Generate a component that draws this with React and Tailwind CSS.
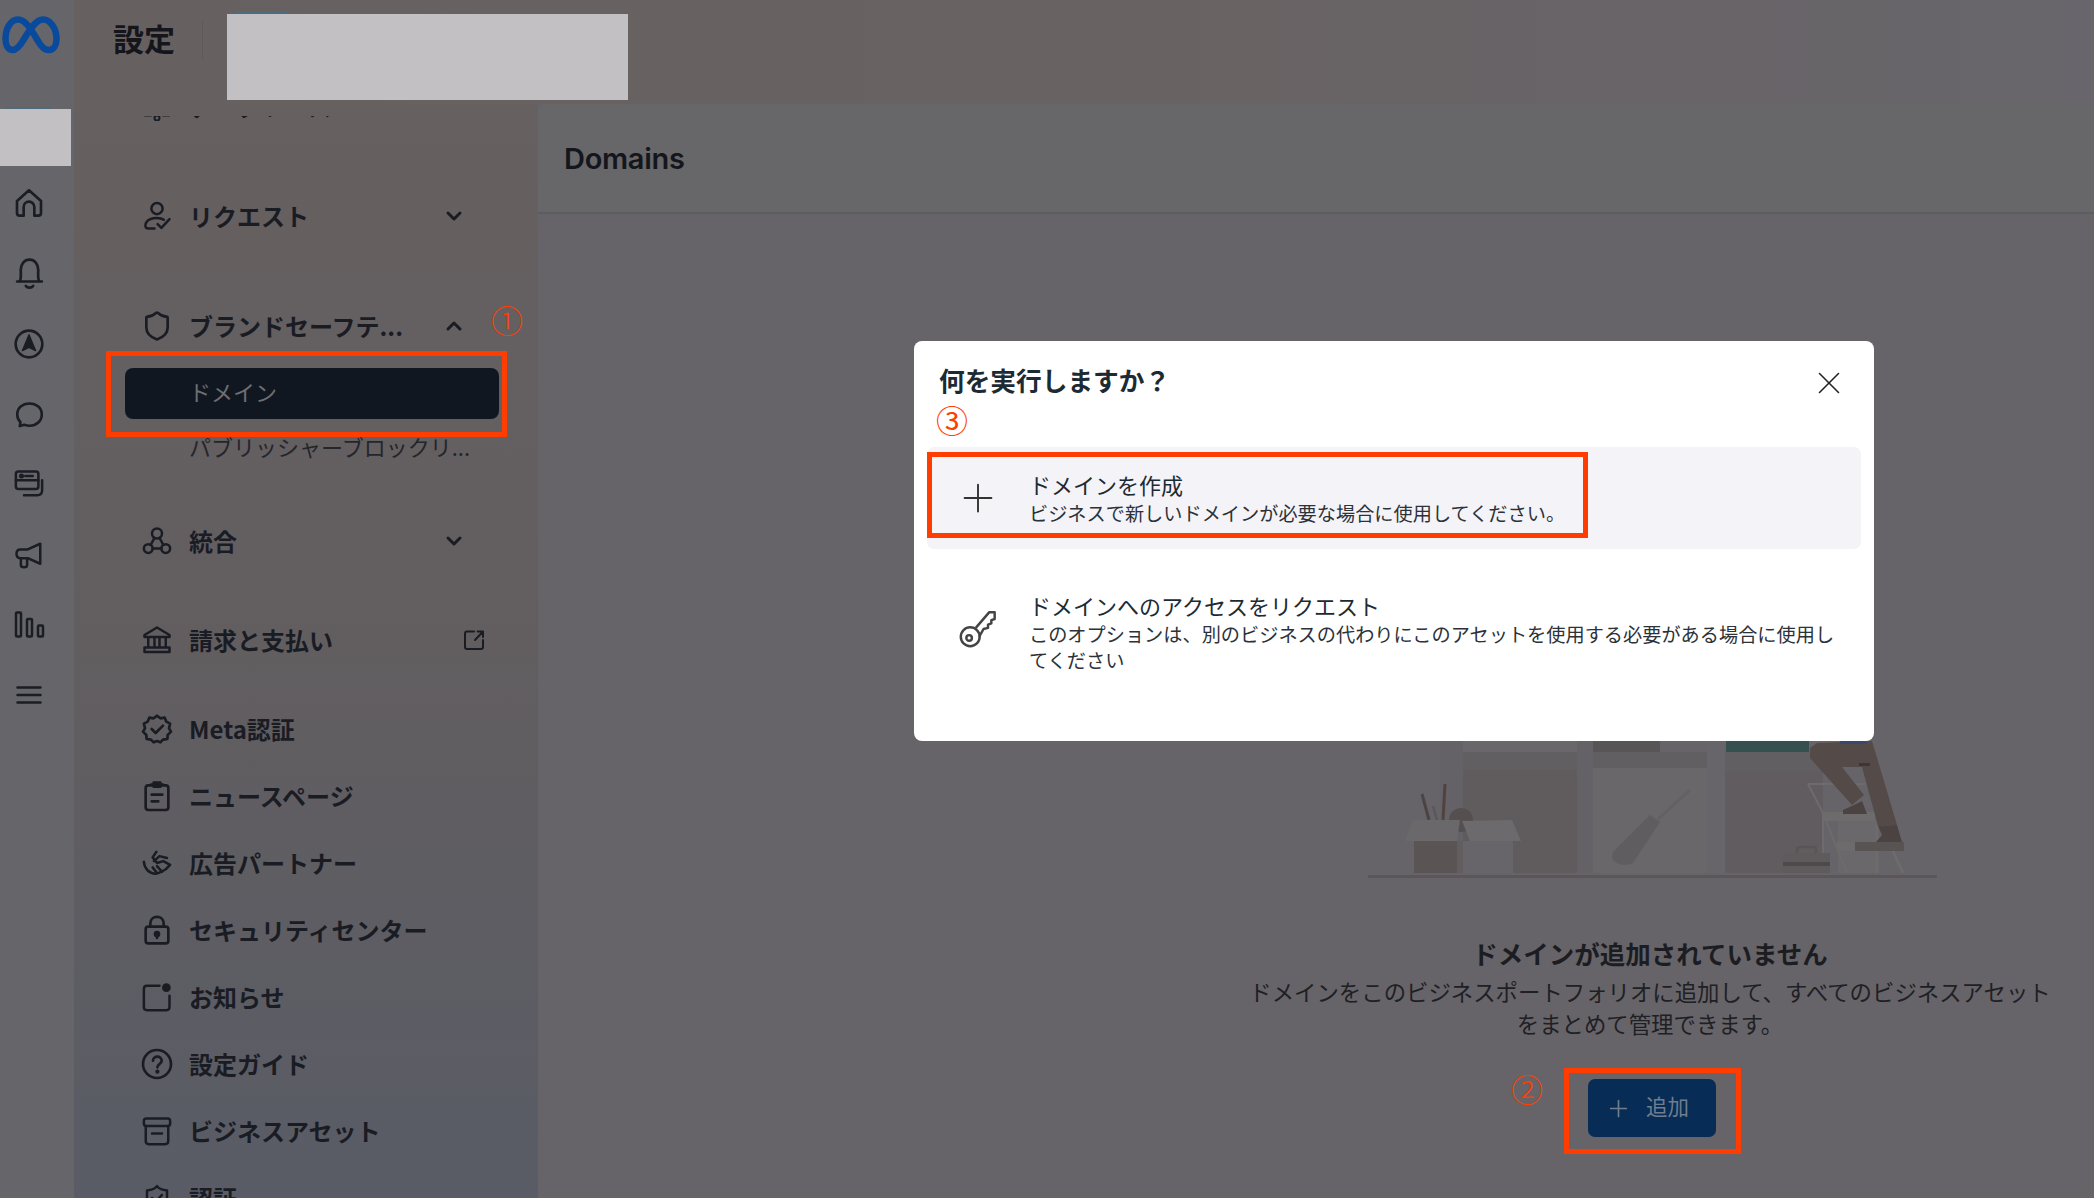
import React from 'react';
import { ChevronDown, ChevronUp, Plus, X, Shield } from 'lucide-react';

const jp = "font-['Noto_Sans_CJK_JP','Noto_Sans',sans-serif]";

const MetaLogo = () => (
  <svg width="58" height="38" viewBox="0 0 58 38" fill="none" stroke="#0a4a9c" strokeWidth="6.5">
    <path d="M3.5 23C3.5 12 9 3.5 16 3.5C24 3.5 30 15 36 25C40 32 44 34.5 47.5 34C52 33.5 54.5 29 54.5 23C54.5 12 48 3.5 41 3.5C34 3.5 28 13 22 23C18 30 14 34.5 10 34C6 33.5 3.5 29 3.5 23Z" />
  </svg>
);

const RailIcon = ({ children }) => (
  <div className="flex h-[70.3px] w-[58px] items-center justify-center text-[#1b1d25]">{children}</div>
);

const stroke = { fill: 'none', stroke: 'currentColor', strokeWidth: 2, strokeLinecap: 'round', strokeLinejoin: 'round' };

const HomeIcon = () => (
  <svg width="32" height="32" viewBox="0 0 24 24" {...stroke}>
    <path d="M3 10.5L12 2.5L21 10.5V19.5C21 20.6 20.1 21.5 19 21.5H16V15C16 12.8 14.2 11 12 11C9.8 11 8 12.8 8 15V21.5H5C3.9 21.5 3 20.6 3 19.5Z" />
  </svg>
);

const BellIcon = () => (
  <svg width="35" height="35" viewBox="0 0 24 24" {...stroke} strokeWidth="1.85">
    <path d="M5.5 17C6.5 15 6 13 6 9.5C6 5.5 8.5 2.5 12 2.5C15.5 2.5 18 5.5 18 9.5C18 13 17.5 15 18.5 17" />
    <path d="M3.5 17.5H20.5M9.5 20.5C10.5 22 13.5 22 14.5 20.5" />
  </svg>
);

const NavIcon = () => (
  <svg width="32" height="32" viewBox="0 0 24 24" {...stroke}>
    <circle cx="12" cy="12" r="10" />
    <path d="M12 5L17 17L12 14.5L7 17Z" fill="currentColor" stroke="currentColor" strokeWidth="1" />
  </svg>
);

const ChatIcon = () => (
  <svg width="31" height="31" viewBox="0 0 24 24" {...stroke}>
    <path d="M12 3.5C6.5 3.5 2.5 7 2.5 12C2.5 14.5 3.5 16.5 5 18L4.5 21L8 20C9.5 20.5 10.5 20.7 12 20.7C17.5 20.7 21.5 17 21.5 12C21.5 7 17.5 3.5 12 3.5Z" />
  </svg>
);

const CardsIcon = () => (
  <svg width="32" height="30" viewBox="0 0 24 24" {...stroke}>
    <rect x="1.5" y="2" width="18" height="14" rx="2" />
    <path d="M1.5 9H19.5M9 5.5H15" />
    <circle cx="6" cy="5.5" r="1" fill="currentColor" />
    <path d="M22.5 9V17C22.5 19.5 21 21 18.5 21H8" />
  </svg>
);

const MegaphoneIcon = () => (
  <svg width="30" height="30" viewBox="0 0 24 24" {...stroke}>
    <path d="M21 3V19L11 14.5H5C3 14.5 2 13 2 11C2 9 3 7.5 5 7.5H11Z" />
    <path d="M5.5 14.5V20C5.5 22.5 10.5 22.5 10.5 20V14.5" />
  </svg>
);

const BarsIcon = () => (
  <svg width="31" height="27" viewBox="0 0 31 27" {...stroke} strokeWidth="2.5">
    <rect x="2" y="1.5" width="5" height="24" rx="1" />
    <rect x="13" y="8" width="5" height="17.5" rx="1" />
    <rect x="24" y="14.5" width="5" height="11" rx="1" />
  </svg>
);

const MenuIcon = () => (
  <svg width="26" height="20" viewBox="0 0 26 20" {...stroke} strokeWidth="2.5">
    <path d="M1.5 2.5H24.5M1.5 10H24.5M1.5 17.5H24.5" />
  </svg>
);

const Rail = () => (
  <aside className="flex w-[74px] shrink-0 flex-col bg-[#666569]">
    <div className="h-[107px] pt-[16px] pl-[2px]">
      <MetaLogo />
    </div>
    <div className="ml-[5px] h-[2px] w-[47px] rounded-t bg-[#4c6c7d]" />
    <div className="h-[57px] w-[71px] bg-[#c2c0c3]" />
    <div className="mt-[2px]">
      <RailIcon><HomeIcon /></RailIcon>
      <RailIcon><BellIcon /></RailIcon>
      <RailIcon><NavIcon /></RailIcon>
      <RailIcon><ChatIcon /></RailIcon>
      <RailIcon><CardsIcon /></RailIcon>
      <RailIcon><MegaphoneIcon /></RailIcon>
      <RailIcon><BarsIcon /></RailIcon>
      <RailIcon><MenuIcon /></RailIcon>
    </div>
  </aside>
);

const sideIcons = {
  source: (
    <svg width="30" height="30" viewBox="0 0 30 30" {...stroke}>
      <circle cx="15" cy="27" r="2.5" />
      <path d="M3 24.5H9M21 24.5H27" />
    </svg>
  ),
  request: (
    <svg width="30" height="32" viewBox="0 0 24 24" {...stroke}>
      <circle cx="12" cy="6" r="4.5" />
      <path d="M10 22H5C2.5 22 2 19.5 3.5 17C5 14.5 8 13.5 12 13.5C14 13.5 16 14 17.5 15M12.5 18.5L15.5 21.5L22 14.5" />
    </svg>
  ),
  shield: <Shield size={32} strokeWidth={2} />,
  integration: (
    <svg width="30" height="30" viewBox="0 0 24 24" {...stroke}>
      <circle cx="12" cy="6" r="4" />
      <circle cx="5" cy="18" r="3.5" />
      <circle cx="19" cy="18" r="3.5" />
      <path d="M8.5 18H15.5M10 9.5L7 15M14 9.5L17 15" />
    </svg>
  ),
  bank: (
    <svg width="32" height="30" viewBox="0 0 24 24" {...stroke}>
      <path d="M2 8L12 2L22 8V9.5H2ZM5 9.5V18M10 9.5V18M14 9.5V18M19 9.5V18M2 18H22V21.5H2Z" />
    </svg>
  ),
  badge: (
    <svg width="32" height="32" viewBox="0 0 24 24" {...stroke}>
      <path d="M12 2L14.5 4L17.8 3.5L19 6.5L21.8 8L21 11.5L22.5 14L20 16.5L19.8 19.5L16.5 20L14.5 22L12 21L9.5 22L7.5 20L4.2 19.5L4 16.5L1.5 14L3 11.5L2.2 8L5 6.5L6.2 3.5L9.5 4Z" />
      <path d="M8 12L11 15L16.5 9.5" />
    </svg>
  ),
  news: (
    <svg width="28" height="32" viewBox="0 0 21 24" {...stroke}>
      <rect x="2" y="4" width="17" height="18.5" rx="2" />
      <path d="M6 3.5H15M8 2H13V5H8ZM6.5 11H14.5M6.5 16H11.5" />
    </svg>
  ),
  partner: (
    <svg width="32" height="30" viewBox="0 0 24 24" {...stroke}>
      <path d="M1.5 11C2 17 6 20.5 11 20.5C14 20.5 16 18.5 19 17L22.5 13.5L17 10.5L12 12L8.5 7.5L11.5 3" />
      <path d="M9.5 10.5L14 6.5L20 8M12 20L8.5 15.5M16 19L12 14.5" />
    </svg>
  ),
  lock: (
    <svg width="28" height="32" viewBox="0 0 21 24" {...stroke}>
      <rect x="2" y="9.5" width="17" height="12.5" rx="2" />
      <path d="M5.5 9.5V7C5.5 0.5 15.5 0.5 15.5 7V9.5" />
      <circle cx="10.5" cy="15" r="1.5" fill="currentColor" />
      <path d="M10.5 15V18" />
    </svg>
  ),
  notice: (
    <svg width="30" height="30" viewBox="0 0 24 24" {...stroke}>
      <path d="M14 3H4C2.5 3 1.5 4 1.5 5.5V20C1.5 21.5 2.5 22.5 4 22.5H19.5C21 22.5 22 21.5 22 20V11" />
      <circle cx="19.5" cy="4.5" r="3.5" fill="currentColor" stroke="none" />
    </svg>
  ),
  guide: (
    <svg width="32" height="32" viewBox="0 0 24 24" {...stroke}>
      <circle cx="12" cy="12" r="10.5" />
      <path d="M9 9.5C9 5.5 15.5 5.5 15.5 9.5C15.5 12 12.3 12 12.3 14.5" />
      <circle cx="12.3" cy="17.8" r="0.6" fill="currentColor" />
    </svg>
  ),
  asset: (
    <svg width="30" height="30" viewBox="0 0 24 24" {...stroke}>
      <rect x="1.5" y="2" width="21" height="6" rx="2" />
      <path d="M3 8V20C3 21.5 4 22.5 5.5 22.5H18.5C20 22.5 21 21.5 21 20V8M8 14H16" />
    </svg>
  ),
  verify: (
    <svg width="30" height="30" viewBox="0 0 24 24" {...stroke}>
      <path d="M4 6C9 5.5 11 4 12 2.5C13 4 15 5.5 20 6V13C20 18 16 21 12 22.5C8 21 4 18 4 13ZM8 12L11 15L16 9.5" />
    </svg>
  ),
};

const SideItem = ({ icon, label, right, className = '' }) => (
  <div className={`flex h-[40px] items-center text-[#1a1c24] ${className}`}>
    <div className="flex w-[115px] shrink-0 justify-end pr-[15px]">
      <div className="flex w-[34px] justify-center">{sideIcons[icon]}</div>
    </div>
    <span className="flex-1 truncate text-[24px] font-semibold">{label}</span>
    {right}
  </div>
);

const Chevron = ({ up }) => (
  <div className="mr-[72px] flex w-[24px] justify-center">
    {up ? <ChevronUp size={24} strokeWidth={3} /> : <ChevronDown size={24} strokeWidth={3} />}
  </div>
);

const ExternalLink = () => (
  <div className="mr-[53px]">
    <svg width="22" height="22" viewBox="0 0 22 22" {...stroke}>
      <path d="M11 2.5H4C2.8 2.5 2 3.3 2 4.5V18C2 19.2 2.8 20 4 20H18C19.2 20 20 19.2 20 18V11M12 11L20 2.5M14.5 2.5H20V8" />
    </svg>
  </div>
);

const Sidebar = () => (
  <nav className="h-full w-[464px] shrink-0 bg-gradient-to-b from-[#666060] via-[#625e60] to-[#595c66] pt-[12px]">
    <div className="h-full overflow-hidden">
      <SideItem icon="source" label="データソース" className="-mt-[30px]" />
      <SideItem icon="request" label="リクエスト" right={<Chevron />} className="mt-[70px]" />
      <SideItem icon="shield" label="ブランドセーフテ..." right={<Chevron up />} className="mt-[70px]" />
      <div className="mt-[22px] ml-[51px] flex h-[51px] w-[374px] items-center rounded-[8px] bg-[#111720] pb-[4px] pl-[64px] text-[22px] text-[#6d6f75]">
        ドメイン
      </div>
      <div className="mt-[9px] flex h-[40px] items-center pb-[4px] pl-[115px] text-[22px] text-[#25262c]">
        パブリッシャーブロックリ...
      </div>
      <SideItem icon="integration" label="統合" right={<Chevron />} className="mt-[53px]" />
      <SideItem icon="bank" label="請求と支払い" right={<ExternalLink />} className="mt-[59px]" />
      <SideItem icon="badge" label="Meta認証" className="mt-[49px]" />
      <SideItem icon="news" label="ニュースページ" className="mt-[27px]" />
      <SideItem icon="partner" label="広告パートナー" className="mt-[27px]" />
      <SideItem icon="lock" label="セキュリティセンター" className="mt-[27px]" />
      <SideItem icon="notice" label="お知らせ" className="mt-[27px]" />
      <SideItem icon="guide" label="設定ガイド" className="mt-[27px]" />
      <SideItem icon="asset" label="ビジネスアセット" className="mt-[27px]" />
      <SideItem icon="verify" label="認証" className="mt-[27px]" />
    </div>
  </nav>
);

// shelves, box, tools and the man on the step ladder behind the dialog
const Illustration = () => (
  <svg width="580" height="146" viewBox="0 0 580 146" className="block">
    <rect x="95" y="0" width="114" height="11" fill="#69676a" />
    <rect x="225" y="0" width="67" height="11" fill="#585557" />
    <rect x="95" y="11" width="262" height="18" fill="#625f62" />
    <rect x="357" y="11" width="98" height="19" fill="#625f62" />
    <rect x="72" y="0" width="23" height="132" fill="#646266" />
    <rect x="95" y="29" width="114" height="103" fill="#605b5d" />
    <rect x="209" y="0" width="16" height="132" fill="#646266" />
    <rect x="225" y="27" width="114" height="105" fill="#69676a" />
    <rect x="339" y="0" width="18" height="132" fill="#676569" />
    <rect x="357" y="30" width="98" height="102" fill="#615c5f" />
    <rect x="358" y="0" width="83" height="11" fill="#35504f" />
    <path d="M245 111L282 74L292 81L265 122C258 126 240 124 245 111Z" fill="#5f5d60" />
    <path d="M290 78L322 49" fill="none" stroke="#636164" strokeWidth="3" />

    <path d="M54 53L61 79" stroke="#4c4443" strokeWidth="3" />
    <path d="M65 65L69 79" stroke="#5c5759" strokeWidth="2.5" />
    <path d="M77 43L75 79" stroke="#50433f" strokeWidth="3" />
    <circle cx="93" cy="79" r="12" fill="#554f50" />
    <rect x="46" y="100" width="43" height="32" fill="#5a5455" />
    <rect x="89" y="100" width="6" height="32" fill="#625d5f" />
    <rect x="95" y="100" width="50" height="32" fill="#676569" />
    <path d="M45 79H92L89 100H37Z" fill="#6a686b" />
    <path d="M94 80L144 79L153 100H102Z" fill="#6c6a6d" />

    <rect x="470" y="79" width="39" height="53" fill="#6a686b" />
    <path d="M440 43H497M440 43L455 72M458 80L479 132M455 72V132" fill="none" stroke="#6d6b6c" strokeWidth="2" />
    <path d="M509 84V132M525 110L535 132" fill="none" stroke="#6d6b6c" strokeWidth="3" />
    <rect x="455" y="71" width="52" height="9" fill="#6d6b6c" />
    <rect x="469" y="101" width="18" height="9" fill="#6d6b6c" />
    <rect x="487" y="101" width="49" height="9" fill="#595454" />

    <path d="M429 112V108C429 106 431 106 433 106H444C446 106 448 106 448 108V112" fill="none" stroke="#5a5455" strokeWidth="2.5" />
    <rect x="415" y="112" width="47" height="20" fill="#5f5a5b" />
    <rect x="415" y="121" width="47" height="4" fill="#4e494a" />

    <path d="M442 7L449 2L504 0L529 84L510 85L494 26H474L496 54L484 64L442 17Z" fill="#544a48" />
    <rect x="472" y="0" width="27" height="3" fill="#3b4770" />
    <rect x="491" y="22" width="11" height="3" fill="#3b3638" />
    <path d="M486 64L494 60L499 73H475V69Z" fill="#4a4341" />
    <path d="M510 85L529 84L534 101H508L514 94Z" fill="#4a4341" />

    <rect x="0" y="134" width="569" height="3" fill="#5c5658" />
  </svg>
);

const EmptyState = () => (
  <div className="ml-auto mr-[44px] flex w-[800px] flex-col items-center">
    <div className="flex w-[596px] justify-end">
      <Illustration />
    </div>
    <h3 className="mt-[48px] text-[25.5px] leading-[36px] font-bold text-[#1c1d22]">ドメインが追加されていません</h3>
    <p className="mt-[4px] w-[815px] shrink-0 text-center text-[22.4px] leading-[32px] text-[#1f2024]">
      ドメインをこのビジネスポートフォリオに追加して、すべてのビジネスアセットをまとめて管理できます。
    </p>
    <button className="relative mt-[40px] ml-[4px] flex h-[58px] w-[128px] items-center gap-[14px] rounded-[7px] bg-[#072c56] pl-[17px] text-[21.5px] text-[#6f7d8e]">
      <Plus size={27} strokeWidth={1.5} />
      <span className="pb-[3px]">追加</span>
      <span className="absolute -top-[11px] -left-[24px] -right-[25px] -bottom-[17px] border-[5px] border-[#ff3d00]" />
      <span className="absolute -left-[77px] -top-[14px] text-[32px] leading-[46px] font-light text-[#ff3d00]">②</span>
    </button>
  </div>
);

const Main = () => (
  <main className="relative flex h-full flex-1 flex-col">
    <div className="flex h-[110px] shrink-0 items-center rounded-tl-[6px] border-b-2 border-[#5d5c61] bg-[#676669] pt-[2px] pl-[26px]">
      <h2 className="font-['Inter',sans-serif] text-[29px] font-semibold tracking-[-0.3px] text-[#14161c]">Domains</h2>
    </div>
    <div className="pt-[527px]">
      <EmptyState />
    </div>
  </main>
);

const Modal = () => (
  <div className="absolute left-[914px] top-[341px] h-[400px] w-[960px] rounded-[8px] bg-white px-[13px] text-[#1c2b33]">
    <div className="relative h-[106px]">
      <h2 className="pt-[20px] pl-[12px] text-[25.7px] leading-[38px] font-bold">何を実行しますか？</h2>
      <span className="absolute left-[9px] top-[55px] text-[32px] leading-[46px] font-normal text-[#ff3d00]">③</span>
      <button className="absolute right-[13px] top-[23px] text-[#222]">
        <X size={38} strokeWidth={1} />
      </button>
    </div>
    <div className="relative flex h-[102px] items-center rounded-[7px] bg-[#f4f3f7]">
      <div className="flex w-[102px] justify-center">
        <Plus size={46} strokeWidth={1} className="text-[#333]" />
      </div>
      <div className="-mt-[3px]">
        <div className="text-[22px] leading-[33px]">ドメインを作成</div>
        <div className="text-[19.2px] leading-[25px] text-[#2c3238]">ビジネスで新しいドメインが必要な場合に使用してください。</div>
      </div>
      <span className="absolute left-0 top-[5px] h-[86px] w-[661px] border-[5px] border-[#ff3d00]" />
    </div>
    <div className="mt-[40px] flex">
      <div className="flex w-[102px] justify-center pt-[20px]">
        <svg width="40" height="40" viewBox="0 0 36 36" fill="none" stroke="#444" strokeWidth="2.2" strokeLinejoin="round">
          <circle cx="11" cy="25" r="8.5" />
          <circle cx="10" cy="26" r="2.5" />
          <path d="M16 17L28 3H33V9L30 10V13L27 14V17L23 18L19 25" />
        </svg>
      </div>
      <div className="flex-1 pr-[16px]">
        <div className="text-[22px] leading-[33px]">ドメインへのアクセスをリクエスト</div>
        <div className="text-[19.2px] leading-[25.5px] text-[#2c3238]">このオプションは、別のビジネスの代わりにこのアセットを使用する必要がある場合に使用してください</div>
      </div>
    </div>
  </div>
);

export default function App() {
  return (
    <div className={`relative flex h-screen w-full overflow-hidden bg-[#666468] ${jp}`}>
      <Rail />
      <div className="flex min-w-0 flex-1 flex-col">
        <header className="flex h-[104px] shrink-0 items-start bg-gradient-to-r from-[#676060] via-[#686262] to-[#68666c]">
          <h1 className="mt-[17px] ml-[39px] text-[31px] leading-[42px] font-semibold text-[#14161c]">設定</h1>
          <div className="mt-[21px] ml-[27px] h-[38px] w-px bg-[#5c5959]" />
          <div className="ml-[24px] flex flex-col">
            <div className="mt-[11px] ml-[7px] h-[3px] w-[53px] rounded-t bg-[#4c6c7d]" />
            <div className="h-[86px] w-[401px] bg-[#c2c0c3]" />
          </div>
        </header>
        <div className="flex min-h-0 flex-1">
          <Sidebar />
          <Main />
        </div>
      </div>
      {/* annotations for the sidebar step */}
      <span className="absolute left-[106px] top-[351px] h-[86px] w-[401px] border-[5px] border-[#ff3d00]" />
      <span className="absolute left-[491px] top-[296px] text-[32px] leading-[46px] font-light text-[#ff3d00]">①</span>
      <Modal />
    </div>
  );
}
